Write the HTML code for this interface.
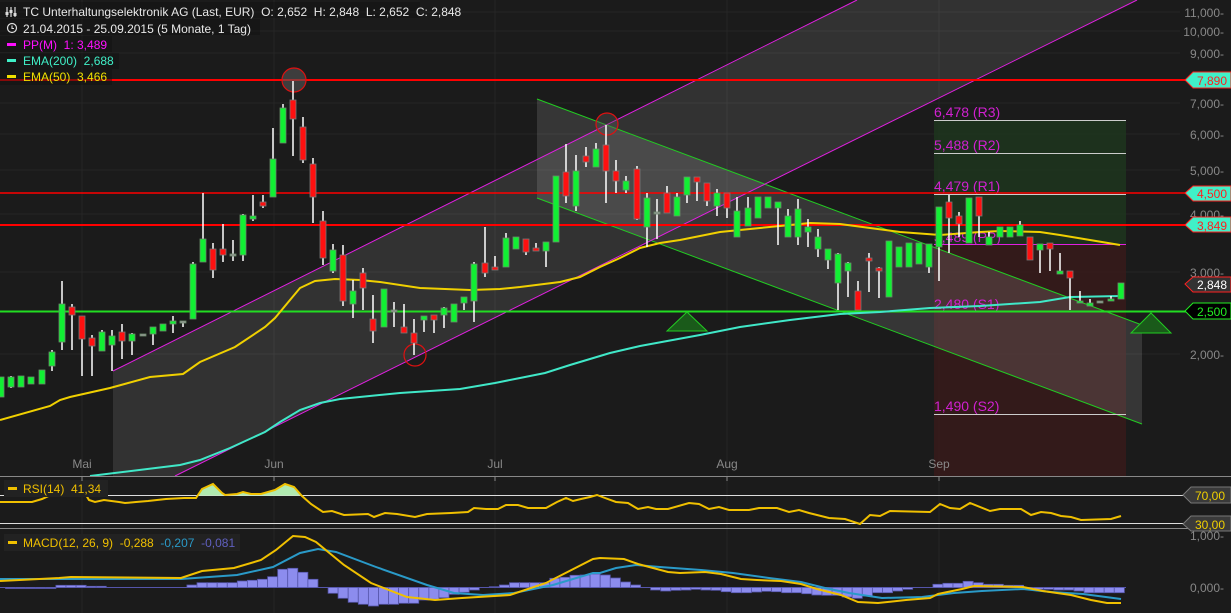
<!DOCTYPE html>
<html><head><meta charset="utf-8"><style>
html,body{margin:0;padding:0;background:#1b1b1b;overflow:hidden}
svg{display:block;font-family:"Liberation Sans",sans-serif}
text,tspan{white-space:pre}
</style></head><body>
<svg id="s" width="1231" height="613" viewBox="0 0 1231 613" xmlns="http://www.w3.org/2000/svg">
<rect width="1231" height="613" fill="#1b1b1b"/>
<g stroke="#262626" stroke-width="1">
<line x1="0" y1="12" x2="1180" y2="12"/><line x1="0" y1="31" x2="1180" y2="31"/><line x1="0" y1="53" x2="1180" y2="53"/>
<line x1="0" y1="103" x2="1180" y2="103"/><line x1="0" y1="134" x2="1180" y2="134"/><line x1="0" y1="170" x2="1180" y2="170"/>
<line x1="0" y1="214" x2="1180" y2="214"/><line x1="0" y1="272" x2="1180" y2="272"/><line x1="0" y1="354" x2="1180" y2="354"/>
<line x1="82" y1="0" x2="82" y2="613"/><line x1="274" y1="0" x2="274" y2="613"/><line x1="495" y1="0" x2="495" y2="613"/><line x1="727" y1="0" x2="727" y2="613"/><line x1="939" y1="0" x2="939" y2="613"/>
</g>
<polygon points="113,371 857,0 1137,0 175,476 113,476" fill="#ffffff" fill-opacity="0.1"/>
<rect x="934" y="120" width="192" height="124" fill="#1f3a1f" fill-opacity="0.75"/>
<rect x="934" y="244" width="192" height="232" fill="#3a1a1a" fill-opacity="0.8"/>
<polygon points="537,99 1142,325 1142,424 537,198" fill="#ffffff" fill-opacity="0.12"/>
<line x1="537" y1="99" x2="1142" y2="325" stroke="#22cc22" stroke-width="1"/>
<line x1="537" y1="198" x2="1142" y2="424" stroke="#22cc22" stroke-width="1"/>
<line x1="113" y1="371" x2="857" y2="0" stroke="#e020e0" stroke-width="1"/>
<line x1="175" y1="476" x2="1137" y2="0" stroke="#e020e0" stroke-width="1"/>
<g stroke="#cccccc" stroke-width="1">
<line x1="934" y1="120.5" x2="1126" y2="120.5"/><line x1="934" y1="153.5" x2="1126" y2="153.5"/><line x1="934" y1="194.5" x2="1126" y2="194.5"/><line x1="934" y1="311.5" x2="1126" y2="311.5"/><line x1="934" y1="414.5" x2="1126" y2="414.5"/>
</g>
<line x1="934" y1="244.5" x2="1126" y2="244.5" stroke="#e020e0"/>
<g fill="#d020d0" font-size="14">
<text x="934" y="117">6,478 (R3)</text><text x="934" y="150">5,488 (R2)</text><text x="934" y="191">4,479 (R1)</text><text x="934" y="242">3,489 (PP)</text><text x="934" y="309">2,480 (S1)</text><text x="934" y="411">1,490 (S2)</text>
</g>
<line x1="0" y1="80" x2="1186" y2="80" stroke="#ff0000" stroke-width="2"/>
<line x1="0" y1="193" x2="1186" y2="193" stroke="#ff0000" stroke-width="1.6"/>
<line x1="0" y1="225" x2="1186" y2="225" stroke="#ff0000" stroke-width="2"/>
<line x1="0" y1="311.5" x2="1186" y2="311.5" stroke="#22dd22" stroke-width="2"/>
<circle cx="294" cy="80" r="12" fill="#555" fill-opacity="0.6" stroke="#dd1111" stroke-width="1.2"/>
<circle cx="607" cy="124" r="11" fill="#555" fill-opacity="0.4" stroke="#dd1111" stroke-width="1.2"/>
<circle cx="415" cy="355" r="11" fill="none" stroke="#dd1111" stroke-width="1.2"/>
<polyline fill="none" stroke="#f0d000" stroke-width="2" points="0,420 50,406 60,400 70,397 110,388 150,377 183,374 200,362 235,347 265,327 275,318 290,300 300,288 315,281 335,279 360,280 380,282 420,288 470,290 500,289 520,287 560,282 580,277 600,267 620,258 640,248 660,243 680,240 700,236 720,232 760,228 790,225 810,223 840,224 870,228 900,232 940,235 980,232 1000,231 1040,232 1060,235 1090,240 1120,245"/>
<polyline fill="none" stroke="#40e8c8" stroke-width="2" points="90,476 180,465 200,460 230,448 265,432 280,422 300,410 320,403 340,399 400,393 460,389 495,383 520,378 545,373 570,365 610,353 640,346 700,335 740,327 790,320 840,314 880,312 930,308 980,306 1040,302 1070,297 1121,296"/>
<g id="candles"></g>
<polygon points="687,312 667,331 707,331" fill="#1a5a1a" stroke="#22cc22"/>
<polygon points="1151,313 1131,333 1171,333" fill="#1a5a1a" stroke="#22cc22"/>
<g fill="#888" font-size="12" text-anchor="middle">
<text x="82" y="468">Mai</text><text x="274" y="468">Jun</text><text x="495" y="468">Jul</text><text x="727" y="468">Aug</text><text x="939" y="468">Sep</text>
</g>
<g fill="#888" font-size="12" text-anchor="end">
<text x="1224" y="17">11,000-</text><text x="1224" y="36">10,000-</text><text x="1224" y="58">9,000-</text><text x="1224" y="108">7,000-</text><text x="1224" y="139">6,000-</text><text x="1224" y="175">5,000-</text><text x="1224" y="219">4,000-</text><text x="1224" y="277">3,000-</text><text x="1224" y="359">2,000-</text><text x="1224" y="540">1,000-</text><text x="1224" y="592">0,000-</text>
</g>
<g font-size="12" text-anchor="middle">
<polygon points="1185,80 1193,72 1231,72 1231,88 1193,88" fill="#40f0c8" stroke="#ff2020"/><text x="1212" y="85" fill="#ff2020">7,890</text>
<polygon points="1185,193 1193,186 1231,186 1231,201 1193,201" fill="#40f0c8" stroke="#ff2020"/><text x="1212" y="198" fill="#ff2020">4,500</text>
<polygon points="1185,225 1193,217 1231,217 1231,232 1193,232" fill="#40f0c8" stroke="#ff2020"/><text x="1212" y="230" fill="#ff2020">3,849</text>
<polygon points="1185,284 1193,277 1231,277 1231,292 1193,292" fill="#333" stroke="#ff2020"/><text x="1212" y="289" fill="#fff">2,848</text>
<polygon points="1185,311 1193,303 1231,303 1231,319 1193,319" fill="#000" stroke="#22ee22"/><text x="1212" y="316" fill="#22ee22">2,500</text>
</g>
<line x1="0" y1="476.5" x2="1231" y2="476.5" stroke="#888"/>
<line x1="0" y1="495.5" x2="1185" y2="495.5" stroke="#ddd"/>
<line x1="0" y1="523.5" x2="1185" y2="523.5" stroke="#ddd"/>
<line x1="0" y1="528.5" x2="1231" y2="528.5" stroke="#888"/>
<clipPath id="above"><rect x="0" y="477" width="1231" height="18.5"/></clipPath>
<polygon clip-path="url(#above)" fill="#b0eab0" points="0,495.5 32,502 42,499 53,494 65,488 71,485 83,490 89,500 95,502 104,500 119,502 125,503 136,502 148,501 166,499 184,498 196,498 202,489 213,484 222,493 225,495 237,494 243,492 251,494 261,494 275,490 285,484 294,487 302,496 311,504 323,512 620,512 620,495.5"/>
<polyline fill="none" stroke="#f0c000" stroke-width="2" points="0,502 32,502 42,499 53,494 65,488 71,485 83,490 89,500 95,502 104,500 119,502 125,503 136,502 148,501 166,499 184,498 196,498 202,489 213,484 222,493 225,495 237,494 243,492 251,494 261,494 275,490 285,484 294,487 302,496 311,504 323,512 332,511 344,515 368,514 374,517 385,513 397,514 415,517 427,514 451,513 468,512 474,508 486,509 498,509 506,505 518,505 528,508 546,508 557,502 566,498 573,501 581,499 590,497 597,495 605,498 616,502 628,503 638,509 648,507 656,509 668,509 689,503 699,504 709,509 719,507 729,510 749,510 759,508 777,508 789,512 799,510 809,513 829,518 845,519 860,524 870,515 880,516 890,511 930,512 940,504 950,508 960,509 970,503 990,511 1000,509 1021,509 1031,515 1041,512 1051,513 1061,516 1071,517 1081,520 1111,519 1121,516"/>
<rect x="4" y="480" width="104" height="17" fill="#222"/>
<rect x="8" y="487" width="9" height="3" fill="#f0c000"/>
<text x="23" y="493" fill="#f0c000" font-size="12">RSI(14)&#160;&#160;41,34</text>
<g font-size="12" text-anchor="middle">
<polygon points="1183,495 1191,487 1231,487 1231,503 1191,503" fill="#3a3a3a" stroke="#777"/><text x="1210" y="500" fill="#f0d000">70,00</text>
<polygon points="1183,524 1191,516 1231,516 1231,531 1191,531" fill="#3a3a3a" stroke="#777"/><text x="1210" y="529" fill="#f0d000">30,00</text>
</g>
<line x1="0" y1="587.5" x2="1126" y2="587.5" stroke="#5555aa"/>
<g id="hist"></g>
<polyline fill="none" stroke="#2a9ac8" stroke-width="2" points="0,579 181,579 237,575 273,567 300,553 318,549 336,552 376,567 427,585 454,593 483,595 514,593 553,585 593,573 600,573 616,568 636,565 660,567 701,570 733,573 769,578 801,582 825,588 849,593 882,598 922,597 954,593 982,591 1023,589 1051,592 1083,594 1121,599"/>
<polyline fill="none" stroke="#f0c000" stroke-width="2" points="0,581 59,578 71,577 181,578 202,571 234,568 261,560 276,550 293,536 305,537 316,542 344,565 371,583 407,597 435,600 462,598 510,595 546,583 593,559 600,558 624,559 638,564 668,572 680,573 705,572 721,574 741,579 757,580 781,581 801,584 817,589 841,595 858,602 878,603 906,600 930,598 938,594 962,589 974,586 1023,587 1043,591 1071,595 1091,600 1107,603 1121,603"/>
<rect x="4" y="534" width="236" height="17" fill="#222"/>
<rect x="8" y="541" width="9" height="3" fill="#f0c000"/>
<text x="23" y="547" font-size="12"><tspan fill="#f0c000">MACD(12, 26, 9)&#160;&#160;-0,288&#160;&#160;</tspan><tspan fill="#2a9ac8">-0,207&#160;&#160;</tspan><tspan fill="#6060c0">-0,081</tspan></text>
<g stroke="#888"><line x1="82" y1="476" x2="82" y2="481"/><line x1="274" y1="476" x2="274" y2="481"/><line x1="495" y1="476" x2="495" y2="481"/><line x1="727" y1="476" x2="727" y2="481"/><line x1="939" y1="476" x2="939" y2="481"/></g>
<g font-size="12">
<rect x="0" y="2" width="420" height="16" fill="#111" fill-opacity="0.5"/>
<rect x="0" y="19" width="260" height="16" fill="#111" fill-opacity="0.5"/>
<rect x="0" y="36" width="112" height="16" fill="#111" fill-opacity="0.5"/>
<rect x="0" y="53" width="119" height="16" fill="#111" fill-opacity="0.5"/>
<rect x="0" y="69" width="112" height="16" fill="#111" fill-opacity="0.5"/>
<g stroke="#ddd" stroke-width="1.2"><line x1="7" y1="7" x2="7" y2="17"/><line x1="11" y1="7" x2="11" y2="17"/><line x1="15" y1="7" x2="15" y2="17"/></g>
<g fill="#ddd"><rect x="5.5" y="12" width="3" height="3"/><rect x="9.5" y="10" width="3" height="3"/><rect x="13.5" y="13" width="3" height="3"/></g>
<text x="23" y="16" fill="#e8e8e8">TC Unterhaltungselektronik AG (Last, EUR)&#160;&#160;O: 2,652&#160;&#160;H: 2,848&#160;&#160;L: 2,652&#160;&#160;C: 2,848</text>
<circle cx="12" cy="28" r="4.5" fill="none" stroke="#ddd" stroke-width="1.2"/><path d="M12 25.5V28.5H14" fill="none" stroke="#ddd" stroke-width="1.1"/>
<text x="23" y="33" fill="#e8e8e8">21.04.2015 - 25.09.2015 (5 Monate, 1 Tag)</text>
<rect x="7" y="43" width="9" height="3" fill="#ff10ff"/><text x="23" y="49" fill="#ff10ff">PP(M)&#160;&#160;1: 3,489</text>
<rect x="7" y="59" width="9" height="3" fill="#40f0c8"/><text x="23" y="65" fill="#40f0c8">EMA(200)&#160;&#160;2,688</text>
<rect x="7" y="75" width="9" height="3" fill="#f0e000"/><text x="23" y="81" fill="#f0e000">EMA(50)&#160;&#160;3,466</text>
</g>
</svg>
<script>
var C=[[1,377,397,377,397,'g'],[11,377,387,376,388,'g'],[21,376,387,376,387,'g'],[31,377,384,377,384,'g'],[42,370,384,370,384,'g'],[52,352,366,350,371,'g'],[62,304,342,281,350,'g'],[72,307,315,304,350,'r'],[82,316,339,316,376,'r'],[92,338,346,335,376,'r'],[102,332,351,330,351,'g'],[112,336,345,330,371,'g'],[122,332,341,324,359,'r'],[132,334,341,333,355,'g'],[143,334,335,334,335,'d'],[153,327,334,327,345,'g'],[163,324,331,324,331,'g'],[173,321,324,316,333,'g'],[183,321,322,321,327,'d'],[193,264,319,262,319,'g'],[203,239,262,193,262,'g'],[213,249,270,243,278,'r'],[223,249,255,224,262,'r'],[233,254,255,240,261,'d'],[243,215,255,214,261,'g'],[253,216,219,195,221,'g'],[263,202,206,195,208,'r'],[273,159,197,128,197,'g'],[283,108,143,104,143,'g'],[293,100,119,81,156,'r'],[303,127,160,117,163,'r'],[313,164,197,158,223,'r'],[323,221,258,211,265,'r'],[333,250,271,244,273,'g'],[343,255,301,245,306,'r'],[353,291,304,280,318,'g'],[363,273,288,268,310,'r'],[373,319,331,295,343,'r'],[384,289,327,289,327,'g'],[394,310,311,302,327,'d'],[404,327,333,304,333,'r'],[414,333,343,319,355,'r'],[424,316,320,316,332,'g'],[434,315,320,315,333,'r'],[444,308,315,307,328,'g'],[454,304,322,304,322,'g'],[464,297,303,297,310,'g'],[474,264,301,262,322,'g'],
[485,263,273,227,277,'r'],[495,267,270,256,270,'r'],[506,238,267,233,267,'g'],[516,237,249,237,249,'g'],[526,239,252,239,255,'r'],[536,248,251,243,251,'r'],[546,242,251,242,267,'g'],[556,176,242,176,242,'g'],[566,172,196,144,203,'r'],[576,171,206,155,211,'g'],[586,156,162,147,167,'r'],[596,149,167,143,167,'g'],[606,145,171,125,203,'r'],[616,171,181,160,193,'r'],[626,181,190,176,193,'g'],[637,169,219,166,220,'r'],[647,198,227,193,247,'g'],[657,212,213,199,239,'d'],[667,193,213,186,213,'r'],[677,197,216,193,216,'g'],[687,177,195,177,203,'g'],[697,177,182,177,201,'r'],[707,183,201,183,206,'r'],[717,193,206,189,216,'g'],[727,193,208,193,218,'r'],[737,211,237,197,237,'g'],[748,208,226,197,226,'g'],[758,197,218,197,218,'g'],[768,197,208,197,208,'g'],[778,202,208,202,245,'g'],[788,216,237,209,237,'g'],[798,209,237,199,245,'g'],[808,227,232,219,247,'g'],[818,237,249,229,257,'g'],[828,249,260,249,269,'g'],[838,254,283,253,310,'g'],[848,263,271,262,297,'g'],[858,291,310,281,310,'r'],[869,258,261,253,292,'r'],[879,268,271,267,298,'r'],[889,241,297,241,297,'g'],[899,247,267,247,267,'g'],[909,243,267,243,267,'g'],[919,243,264,243,264,'g'],[929,244,267,244,273,'g'],
[939,207,247,207,281,'g'],[949,202,218,195,253,'r'],[959,216,224,212,237,'r'],[969,198,243,198,243,'g'],[979,197,216,197,237,'r'],[989,237,245,232,245,'g'],[1000,227,237,227,237,'g'],[1010,227,237,227,237,'g'],[1020,225,236,221,236,'g'],[1030,237,260,237,260,'r'],[1040,244,250,244,273,'g'],[1050,243,249,243,271,'r'],[1060,271,274,253,274,'g'],[1070,271,278,271,310,'r'],[1080,301,303,291,303,'g'],[1090,303,306,299,306,'g'],[1100,301,302,301,302,'d'],[1111,299,301,296,301,'g'],[1121,283,299,283,299,'g']];
var g=document.getElementById('candles'),h='';
C.forEach(function(c){var x=c[0],t=c[1],b=c[2];
if(c[3]<t||c[4]>b)h+='<line x1="'+x+'" y1="'+c[3]+'" x2="'+x+'" y2="'+c[4]+'" stroke="#fff" stroke-width="1.5"/>';
var f=c[5]=='r'?'#ff1010':(c[5]=='d'?'#999':'#11f033');var hh=Math.max(b-t,2);
h+='<rect x="'+(x-3)+'" y="'+t+'" width="6" height="'+hh+'" fill="'+f+'" stroke="'+(c[5]=='r'?'#777':'#6a8a6a')+'" stroke-width="0.8"/>';});
g.innerHTML=h;
var H=[588.5,588.5,588.5,588.5,588.5,585.3,585.3,585.3,586.3,586.3,587.5,587.5,587.5,587.5,587.5,587.5,587.5,587.5,585,582.7,582.7,582.7,582.7,581,580.3,579.3,576.7,569.3,568.3,572.3,579.3,587.5,593.3,598.3,602.3,604.3,606,604.3,604.3,603.3,603.3,600,599.3,597.7,594.3,592.3,590,587.5,586.7,585,582.7,582.7,582.7,582.7,578.3,577.3,575.3,575,574,575,578,582,585,587.5,590,591,590.3,590,589.3,590,590.3,591.7,592.7,592.7,592,591.3,591.7,592.7,592.7,593.7,595,595.3,595.3,597,598.3,596,592.7,592.7,591,589.3,588,587.5,584.3,583.3,583.3,581.3,582.7,584.3,584.3,585.3,585.3,587.5,589.3,589.3,590,590,591,592.7,592.7,592.7,592.7];
var z=587.5,s='';H.forEach(function(v,k){var x=5.5+k*10.08;if(Math.abs(v-z)<0.6)return;var y=Math.min(v,z),hh=Math.abs(v-z);
s+='<rect x="'+x.toFixed(1)+'" y="'+y+'" width="10.08" height="'+hh.toFixed(1)+'" fill="#8c8cee" stroke="#5555aa" stroke-width="0.8"/>';});
document.getElementById('hist').innerHTML=s;
</script>
</body></html>
